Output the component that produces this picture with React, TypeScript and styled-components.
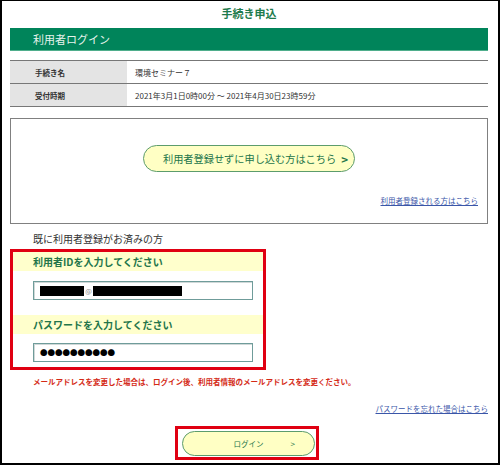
import React from "react";
import styled, { createGlobalStyle } from "styled-components";

function App() {
  return (
    <>
      <GlobalStyle />
      <Frame>
        <PageTitle>手続き申込</PageTitle>
        <SectionBar>利用者ログイン</SectionBar>
        <InfoTable>
          {infoRows.map((row) => (
            <InfoRow key={row.label}>
              <InfoLabel>{row.label}</InfoLabel>
              <InfoValue>{row.value}</InfoValue>
            </InfoRow>
          ))}
        </InfoTable>
        <GuestBox>
          <PillButton>
            利用者登録せずに申し込む方はこちら
            <Chevron>&gt;</Chevron>
          </PillButton>
          <SmallLink href="#">利用者登録される方はこちら</SmallLink>
        </GuestBox>
        <Lead>既に利用者登録がお済みの方</Lead>
        <Highlight>
          <FieldLabel>利用者IDを入力してください</FieldLabel>
          <FieldInput $gap={10}>
            <Redact $width={44} />
            <AtMark>@</AtMark>
            <Redact $width={89} />
          </FieldInput>
          <FieldLabel $gap={15}>パスワードを入力してください</FieldLabel>
          <FieldInput $gap={9}>
            <Dots>●●●●●●●●●●</Dots>
          </FieldInput>
        </Highlight>
        <Notice>
          メールアドレスを変更した場合は、ログイン後、利用者情報のメールアドレスを変更ください。
        </Notice>
        <LinkRow>
          <SmallLink href="#">パスワードを忘れた場合はこちら</SmallLink>
        </LinkRow>
        <LoginMark>
          <LoginButton>
            ログイン
            <LoginChevron>&gt;</LoginChevron>
          </LoginButton>
        </LoginMark>
      </Frame>
    </>
  );
}

const infoRows = [
  { label: "手続き名", value: "環境セミナー７" },
  { label: "受付時期", value: "2021年3月1日0時00分 ～ 2021年4月30日23時59分" },
];

const GlobalStyle = createGlobalStyle`
  html, body {
    margin: 0;
    padding: 0;
    background: #ffffff;
  }
  body {
    font-family: "Noto Sans CJK JP", "Noto Sans", sans-serif;
    color: #222;
  }
`;

const Frame = styled.div`
  width: 500px;
  height: 465px;
  box-sizing: border-box;
  border: solid #000;
  border-width: 1px 2px 2px 2px;
  padding: 0 10px 0 8px;
  display: flex;
  flex-direction: column;
  overflow: hidden;
`;

const PageTitle = styled.div`
  padding-top: 4px;
  height: 16px;
  line-height: 16px;
  margin-bottom: 7px;
  text-align: center;
  font-size: 11px;
  font-weight: bold;
  color: #1d7a4c;
`;

const SectionBar = styled.div`
  height: 22px;
  display: flex;
  align-items: center;
  padding-left: 23px;
  background: #00845a;
  border-bottom: 1px solid #4fae8c;
  color: #e6f3ec;
  font-size: 11px;
`;

const InfoTable = styled.div`
  margin-top: 9px;
  border-bottom: 1px solid #777;
`;

const InfoRow = styled.div`
  display: grid;
  grid-template-columns: 117px 1fr;
  height: 22px;
  border-top: 1px solid #777;
`;

const InfoLabel = styled.div`
  display: flex;
  align-items: center;
  padding-left: 25px;
  background: #e4e4e4;
  font-size: 7.5px;
  font-weight: bold;
  color: #333;
`;

const InfoValue = styled.div`
  display: flex;
  align-items: center;
  padding-left: 8px;
  font-size: 8px;
  color: #333;
`;

const GuestBox = styled.div`
  margin-top: 11px;
  height: 106px;
  box-sizing: border-box;
  border: 1px solid #808080;
  padding: 26px 9px 0;
  display: flex;
  flex-direction: column;
  align-items: center;
`;

const PillButton = styled.div`
  width: 212px;
  height: 27px;
  box-sizing: border-box;
  border: 1px solid #5c9c6c;
  border-radius: 14px;
  background: #ffffc4;
  display: flex;
  align-items: center;
  padding-left: 19px;
  font-size: 10.2px;
  color: #23754a;
  white-space: nowrap;
`;

const Chevron = styled.span`
  margin-left: 5px;
  font-weight: bold;
  font-size: 11.5px;
`;

const SmallLink = styled.a`
  font-size: 7.5px;
  color: #3a56a8;
  text-decoration: underline;
  line-height: 10px;
  white-space: nowrap;
  ${GuestBox} & {
    align-self: flex-end;
    margin-top: 24px;
  }
`;

const Lead = styled.div`
  margin-top: 8px;
  padding-left: 23px;
  line-height: 14px;
  font-size: 10px;
  color: #333;
`;

const Highlight = styled.div`
  margin-top: 3px;
  width: 256px;
  box-sizing: border-box;
  border: 3px solid #e00012;
  padding-bottom: 5px;
`;

const FieldLabel = styled.div<{ $gap?: number }>`
  margin-top: ${(p) => p.$gap ?? 0}px;
  height: 19px;
  display: flex;
  align-items: center;
  padding-left: 20px;
  background: #ffffcc;
  font-size: 10px;
  font-weight: bold;
  color: #23754a;
`;

const FieldInput = styled.div<{ $gap: number }>`
  margin: ${(p) => p.$gap}px 0 0 20px;
  width: 220px;
  height: 19px;
  box-sizing: border-box;
  border: 1px solid #6f9c9a;
  box-shadow: inset 1px 1px 0 #d0d8d8;
  background: #fff;
  display: flex;
  align-items: center;
  padding-left: 6px;
`;

const Redact = styled.span<{ $width: number }>`
  display: block;
  width: ${(p) => p.$width}px;
  height: 10px;
  background: #000;
`;

const AtMark = styled.span`
  width: 9px;
  text-align: center;
  font-size: 7px;
  line-height: 10px;
  color: #888;
`;

const Dots = styled.span`
  font-size: 7.5px;
  line-height: 10px;
  color: #000;
`;

const Notice = styled.div`
  margin-top: 7px;
  padding-left: 23px;
  line-height: 10px;
  font-size: 7.5px;
  font-weight: bold;
  color: #d42a16;
  white-space: nowrap;
`;

const LinkRow = styled.div`
  margin-top: 17px;
  display: flex;
  justify-content: flex-end;
`;

const LoginMark = styled.div`
  margin: 12px auto 0;
  border: 3px solid #e00012;
  padding: 2px 1px 1px 4px;
  width: 144px;
  box-sizing: border-box;
  transform: translateX(-2px);
`;

const LoginButton = styled.div`
  position: relative;
  height: 25px;
  box-sizing: border-box;
  border: 1px solid #5c9c6c;
  border-radius: 13px;
  background: #ffffc4;
  display: flex;
  align-items: center;
  justify-content: center;
  font-size: 7.5px;
  color: #23754a;
`;

const LoginChevron = styled.span`
  position: absolute;
  right: 19px;
  font-size: 8px;
  color: #23754a;
`;

export default App;
